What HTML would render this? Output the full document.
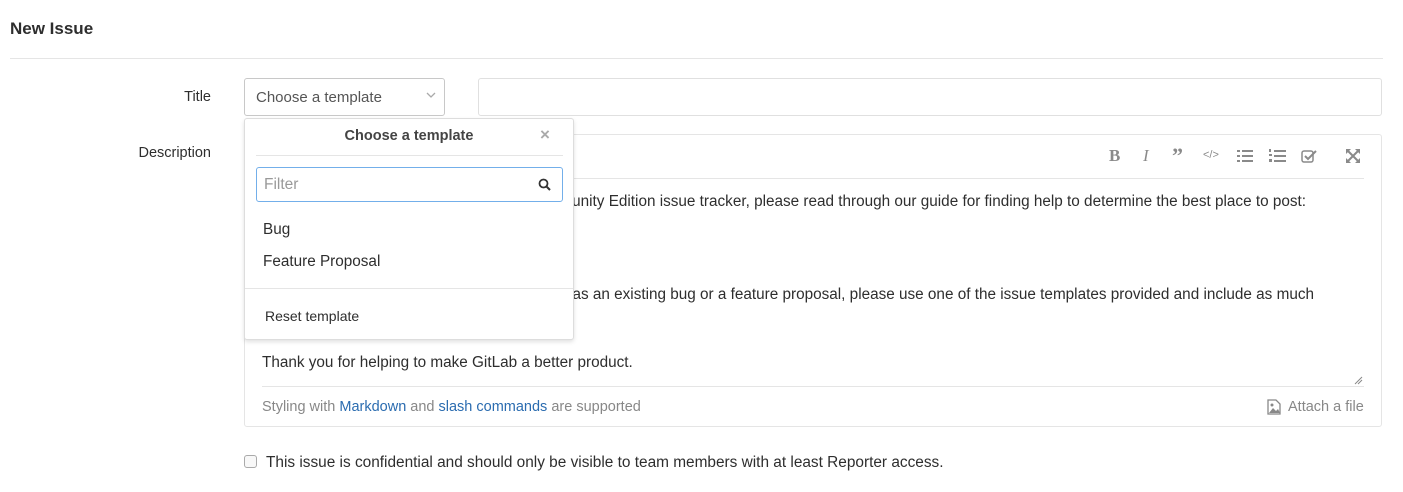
<!DOCTYPE html>
<html><head><meta charset="utf-8"><style>
*{box-sizing:border-box;margin:0;padding:0}
body{width:1403px;height:492px;background:#fff;font-family:"Liberation Sans",sans-serif;color:#2e2e2e;position:relative;overflow:hidden;font-size:14px}
.a{position:absolute;white-space:nowrap}
.lbl{color:#2e2e2e;font-size:14.5px}
.tb{color:#8a8a8a;font-size:15px}
.clip{position:absolute;left:574px;width:800px;height:24px;overflow:hidden}
</style></head><body>
<div class="a" style="left:10px;top:19px;font-size:17px;font-weight:bold;color:#2e2e2e">New Issue</div>
<div class="a" style="left:10px;top:58px;width:1373px;height:1px;background:#e5e5e5"></div>

<div class="a lbl" style="left:0;width:211px;text-align:right;top:89px">Title</div>
<div class="a" style="left:244px;top:78px;width:201px;height:38px;border:1px solid #c8c8c8;border-radius:3px;padding:10px 11px;color:#555;font-size:15px">Choose a template</div>
<svg class="a" style="left:426px;top:92px" width="10" height="7"><path d="M1 1l4 4 4-4" stroke="#aaa" stroke-width="1.3" fill="none"/></svg>
<div class="a" style="left:478px;top:78px;width:904px;height:38px;border:1px solid #e0e0e0;border-radius:3px"></div>

<div class="a lbl" style="left:0;width:211px;text-align:right;top:145px">Description</div>
<div class="a" style="left:244px;top:134px;width:1138px;height:293px;border:1px solid #e5e5e5;border-radius:3px"></div>
<div class="a" style="left:262px;top:178px;width:1102px;height:1px;background:#e5e5e5"></div>
<div class="a tb" style="left:1109px;top:146px;font-family:'Liberation Serif',serif;font-weight:bold;font-size:17px">B</div>
<div class="a tb" style="left:1143px;top:146px;font-family:'Liberation Serif',serif;font-style:italic;font-size:17px">I</div>
<div class="a tb" style="left:1172px;top:143px;font-family:'Liberation Serif',serif;font-weight:bold;font-size:22px">”</div>
<div class="a tb" style="left:1203px;top:149px;font-size:11px">&lt;/&gt;</div>
<svg class="a" style="left:1237px;top:150px" width="16" height="12" fill="#8a8a8a"><rect x="0" y="0" width="3" height="2"/><rect x="5" y="0" width="11" height="2"/><rect x="0" y="5" width="3" height="2"/><rect x="5" y="5" width="11" height="2"/><rect x="0" y="10" width="3" height="2"/><rect x="5" y="10" width="11" height="2"/></svg>
<svg class="a" style="left:1269px;top:148px" width="17" height="15" fill="#8a8a8a"><rect x="0" y="1" width="2" height="3"/><rect x="0" y="6" width="3" height="2"/><rect x="0" y="11" width="3" height="3"/><rect x="5" y="2" width="12" height="2"/><rect x="5" y="7" width="12" height="2"/><rect x="5" y="12" width="12" height="2"/></svg>
<svg class="a" style="left:1301px;top:149px" width="16" height="14"><rect x="1" y="2" width="11" height="11" rx="2" stroke="#8a8a8a" stroke-width="1.5" fill="none"/><path d="M4 7l3 3 8-8" stroke="#8a8a8a" stroke-width="2" fill="none"/></svg>
<svg class="a" style="left:1346px;top:149px" width="14" height="14" stroke="#8a8a8a" stroke-width="2" fill="#8a8a8a"><path d="M1 1l12 12M13 1L1 13" /><path d="M0 0h5l-5 5zM14 0v5l-5-5zM0 14v-5l5 5zM14 14h-5l5-5z" stroke="none"/></svg>

<div class="clip" style="top:191px"><div class="a" style="right:68px;top:2px;font-size:15.3px">If you are submitting an issue to the GitLab Community Edition issue tracker, please read through our guide for finding help to determine the best place to post:</div></div>
<div class="clip" style="top:284px"><div class="a" style="right:60px;top:2px;font-size:15.3px">If you are experiencing an issue which is not described as an existing bug or a feature proposal, please use one of the issue templates provided and include as much</div></div>
<div class="a" style="left:262px;top:354px;font-size:15.3px">Thank you for helping to make GitLab a better product.</div>
<div class="a" style="left:262px;top:386px;width:1102px;height:1px;background:#e5e5e5"></div>
<svg class="a" style="left:1354px;top:376px" width="9" height="9"><path d="M1 8L8 1M4 8L8 4" stroke="#888" stroke-width="1"/></svg>
<div class="a" style="left:262px;top:399px;font-size:14.5px;color:#888">Styling with <span style="color:#2b6cb0">Markdown</span> and <span style="color:#2b6cb0">slash commands</span> are supported</div>
<svg class="a" style="left:1267px;top:399px" width="14" height="16"><path d="M1 1h8l4 4v10H1z" stroke="#888" stroke-width="1.3" fill="none"/><path d="M2 14l4-5 3 3 2-2 2 4z" fill="#888"/><circle cx="5" cy="6" r="1.5" fill="#888"/></svg>
<div class="a" style="left:1288px;top:399px;font-size:14.5px;color:#888">Attach a file</div>

<div class="a" style="left:244px;top:455px;width:13px;height:13px;border:1px solid #aaa;border-radius:3px;background:#f8f8f8"></div>
<div class="a" style="left:266px;top:454px;font-size:15.4px">This issue is confidential and should only be visible to team members with at least Reporter access.</div>

<div class="a" style="left:244px;top:118px;width:330px;height:222px;background:#fff;border:1px solid #ddd;border-radius:3px;box-shadow:0 2px 4px rgba(0,0,0,.12)">
  <div class="a" style="left:0;top:9px;width:100%;text-align:center;font-weight:bold;font-size:14.5px;color:#444">Choose a template</div>
  <div class="a" style="left:295px;top:6px;font-size:17px;color:#aaa;font-weight:bold">×</div>
  <div class="a" style="left:11px;top:36px;width:307px;height:1px;background:#e5e5e5"></div>
  <div class="a" style="left:11px;top:48px;width:307px;height:35px;border:1px solid #73afea;border-radius:3px;padding:8px 7px;color:#999;font-size:15.5px">Filter</div>
  <svg class="a" style="left:293px;top:59px" width="13" height="13"><circle cx="5.5" cy="5.5" r="4" stroke="#333" stroke-width="1.8" fill="none"/><path d="M8.5 8.5l3.5 3.5" stroke="#333" stroke-width="2"/></svg>
  <div class="a" style="left:18px;top:102px;font-size:15.3px">Bug</div>
  <div class="a" style="left:18px;top:134px;font-size:15.3px">Feature Proposal</div>
  <div class="a" style="left:0;top:169px;width:100%;height:1px;background:#e5e5e5"></div>
  <div class="a" style="left:20px;top:189px;font-size:14px">Reset template</div>
</div>
</body></html>
